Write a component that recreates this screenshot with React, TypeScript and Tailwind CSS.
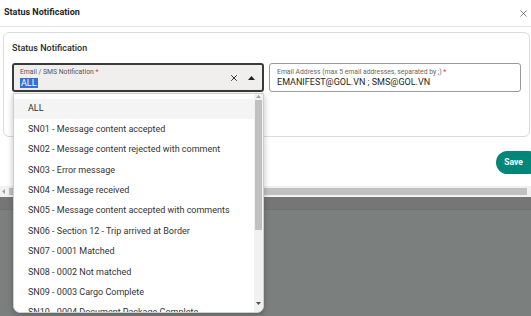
import { X } from "lucide-react";

const options = [
  "ALL",
  "SN01 - Message content accepted",
  "SN02 - Message content rejected with comment",
  "SN03 - Error message",
  "SN04 - Message received",
  "SN05 - Message content accepted with comments",
  "SN06 - Section 12 - Trip arrived at Border",
  "SN07 - 0001 Matched",
  "SN08 - 0002 Not matched",
  "SN09 - 0003 Cargo Complete",
  "SN10 - 0004 Document Package Complete",
];

export default function App() {
  return (
    <div className="relative w-[531px] h-[316px] overflow-hidden bg-[#7b807f] font-['Roboto',sans-serif] text-[#222]">
      {/* MODAL */}
      <div className="w-[540px] bg-white">
        <div className="h-[27px] flex items-center justify-between pl-[4px] pr-[11px] border-b border-[#e6e8e8]">
          <span className="text-[9px] font-bold text-[#1f1f1f]">Status Notification</span>
          <X size={11} strokeWidth={1.6} className="text-[#555]" />
        </div>

        <div className="pt-[5px] pl-[3px] pr-[10px]">
          <div className="h-[105px] rounded-[6px] border border-[#d5dddb] px-[8px] pt-[9px]">
            <div className="text-[9px] font-medium text-[#2a2a2a] h-[12px] leading-[12px]">
              Status Notification
            </div>
            <div className="mt-[9px] flex gap-[5px]">
              <div className="w-[253px] h-[29px] rounded-[3px] border-2 border-[#3a3a3a] bg-[#f0efee] flex items-center pl-[6px] pr-[7px]">
                <div className="flex-1 flex flex-col pt-[1px]">
                  <span className="text-[6.8px] leading-[8px] text-[#555]">
                    Email / SMS Notification <span className="text-[#d33]">*</span>
                  </span>
                  <div className="mt-[1px] text-[9px] leading-[12px]">
                    <span className="bg-[#3470d4] text-white px-[1px]">ALL</span>
                  </div>
                </div>
                <X size={10} strokeWidth={2.2} className="text-[#222]" />
                <svg width="7" height="4" viewBox="0 0 7 4" className="ml-[9px]">
                  <path d="M0 4 L3.5 0 L7 4 Z" fill="#222" />
                </svg>
              </div>
              <div className="w-[253px] h-[29px] rounded-[3px] border border-[#9a9a9a] bg-white flex flex-col justify-center pl-[7px]">
                <span className="text-[6.8px] leading-[8px] text-[#666]">
                  Email Address (max 5 email addresses, separated by ;) <span className="text-[#d33]">*</span>
                </span>
                <span className="text-[9px] leading-[12px] text-[#1e1e1e]">EMANIFEST@GOL.VN ; SMS@GOL.VN</span>
              </div>
            </div>
          </div>
        </div>

        <div className="h-[49px] flex items-center justify-end">
          <button className="w-[44px] h-[23px] rounded-full bg-[#00877a] text-white text-[8.5px] font-bold pr-[9px] mt-[1px]">
            Save
          </button>
        </div>
      </div>

      {/* HORIZONTAL SCROLLBAR */}
      <div className="h-[11px] bg-[#f1f1f1] flex items-center pl-[1px]">
        <svg width="5" height="5" viewBox="0 0 5 5">
          <path d="M4 0 L1 2.5 L4 5 Z" fill="#a3a3a3" />
        </svg>
        <div className="ml-[3px] w-[518px] h-[7px] bg-[#c1c1c1]" />
      </div>
      <div className="h-[13px] bg-[#767676] border-b border-[#707272]" />

      {/* DROPDOWN */}
      <div className="absolute left-[13px] top-[93px] w-[251px] h-[220px] bg-white rounded-b-[7px] border border-[#cfcfcf] shadow-[0_2px_6px_rgba(0,0,0,0.25)] overflow-hidden flex">
        <div className="flex-1 pt-[5px]">
          {options.map((o, i) => (
            <div
              key={o}
              className={`h-[20.4px] flex items-center pl-[14px] text-[9px] text-[#333] whitespace-nowrap ${
                i === 0 ? "bg-[#f4f4f4]" : ""
              }`}
            >
              {o}
            </div>
          ))}
        </div>
        <div className="w-[9px] bg-[#f1f1f1] flex flex-col items-center">
          <svg width="5" height="4" viewBox="0 0 5 4" className="mt-[1px]">
            <path d="M0 3 L2.5 0 L5 3 Z" fill="#a3a3a3" />
          </svg>
          <div className="mt-[1px] w-[7px] h-[130px] bg-[#c1c1c1]" />
          <div className="flex-1" />
          <svg width="5" height="4" viewBox="0 0 5 4" className="mb-[6px]">
            <path d="M0 0 L2.5 3 L5 0 Z" fill="#505050" />
          </svg>
        </div>
      </div>
    </div>
  );
}
